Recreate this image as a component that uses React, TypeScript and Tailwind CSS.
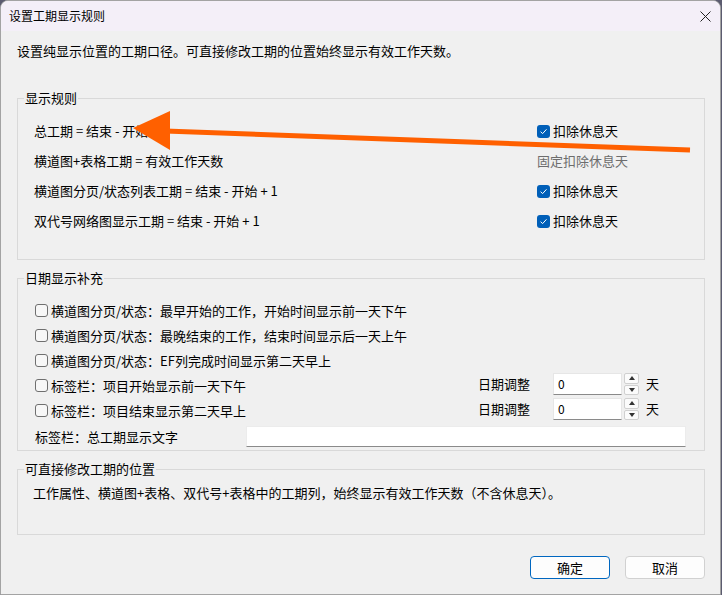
import React from 'react';

const Box = ({ checked }: { checked: boolean }) =>
  checked ? (
    <span className="flex h-[13px] w-[13px] shrink-0 items-center justify-center rounded-[3px] bg-[#005fb8]">
      <svg width="9" height="9" viewBox="0 0 9 9">
        <path d="M1.6 4.7 L3.6 6.6 L7.5 2.3" fill="none" stroke="#fff" strokeWidth="1" />
      </svg>
    </span>
  ) : (
    <span className="h-[13px] w-[13px] shrink-0 rounded-[3px] border border-[#6f6f6f] bg-[#f7f7f7]" />
  );

const GroupBox = ({ title, className, children }: { title: string; className: string; children: React.ReactNode }) => (
  <fieldset className={`ml-[16px] w-[688px] border border-[#d9d9d9] ${className}`}>
    <legend className="ml-[6px] px-px text-[13px] leading-[16px]">{title}</legend>
    {children}
  </fieldset>
);

const Spin = () => (
  <div className="ml-[2px] flex h-[22px] w-[15px] flex-col gap-px">
    <span className="flex flex-1 items-center justify-center rounded-[2px] border border-[#d0d0d0] bg-[#fbfbfb]">
      <svg width="6" height="4" viewBox="0 0 6 4"><path d="M0 4 L3 0 L6 4Z" fill="#333" /></svg>
    </span>
    <span className="flex flex-1 items-center justify-center rounded-[2px] border border-[#d0d0d0] bg-[#fbfbfb]">
      <svg width="6" height="4" viewBox="0 0 6 4"><path d="M0 0 L3 4 L6 0Z" fill="#333" /></svg>
    </span>
  </div>
);

const DateAdjust = () => (
  <div className="flex h-[22px] items-center self-start">
    <span className="w-[75px]">日期调整</span>
    <div className="h-[22px] w-[69px] border border-[#e6e6e6] border-b-[#8a8a8a] bg-white pl-[4px] text-[12px] leading-[20px]">0</div>
    <Spin />
    <span className="ml-[7px]">天</span>
  </div>
);

const rules = [
  { text: '总工期 = 结束 - 开始 + 1', right: 'check' },
  { text: '横道图+表格工期 = 有效工作天数', right: 'fixed' },
  { text: '横道图分页/状态列表工期 = 结束 - 开始 + 1', right: 'check' },
  { text: '双代号网络图显示工期 = 结束 - 开始 + 1', right: 'check' },
];

const extras = [
  { text: '横道图分页/状态：最早开始的工作，开始时间显示前一天下午', adjust: false },
  { text: '横道图分页/状态：最晚结束的工作，结束时间显示后一天上午', adjust: false },
  { text: '横道图分页/状态：EF列完成时间显示第二天早上', adjust: false },
  { text: '标签栏：项目开始显示前一天下午', adjust: true },
  { text: '标签栏：项目结束显示第二天早上', adjust: true },
];

export default function App() {
  return (
    <div className="relative h-[595px] w-[722px] overflow-hidden bg-[#5c5c70] font-['Noto_Sans_CJK_SC',sans-serif] text-[13px] text-black">
      <div className="flex h-[595px] w-[721px] flex-col overflow-hidden rounded-t-[8px] border border-[#a3a3a3] bg-[#f0f0f0]">
        {/* title bar */}
        <div className="flex h-[30px] shrink-0 items-center justify-between bg-[#f4eff8] pl-[8px] pr-[9px]">
          <span className="text-[12px] leading-[16px]">设置工期显示规则</span>
          <svg width="11" height="11" viewBox="0 0 11 11">
            <path d="M0.5 0.5 L10.5 10.5 M10.5 0.5 L0.5 10.5" stroke="#222" strokeWidth="1" />
          </svg>
        </div>

        <p className="mt-[10px] pl-[16px] leading-[20px]">设置纯显示位置的工期口径。可直接修改工期的位置始终显示有效工作天数。</p>

        <GroupBox title="显示规则" className="mt-[29px]">
          <div className="pb-[23px] pt-[10px]">
            {rules.map((r) => (
              <div key={r.text} className="flex h-[30px] items-center pl-[16px]">
                <span className="w-[503px]">{r.text}</span>
                {r.right === 'check' ? (
                  <span className="flex items-center gap-[3px]">
                    <Box checked />
                    扣除休息天
                  </span>
                ) : (
                  <span className="text-[#6d6d6d]">固定扣除休息天</span>
                )}
              </div>
            ))}
          </div>
        </GroupBox>

        <GroupBox title="日期显示补充" className="mt-[10px]">
          <div className="pt-[12px]">
            {extras.map((e) => (
              <div key={e.text} className="flex h-[25px] items-center pl-[17px]">
                <span className="flex w-[443px] items-center gap-[3px]">
                  <Box checked={false} />
                  {e.text}
                </span>
                {e.adjust && <DateAdjust />}
              </div>
            ))}
            <div className="flex h-[27px] items-center pl-[17px]">
              <span className="w-[211px]">标签栏：总工期显示文字</span>
              <div className="h-[21px] w-[440px] border border-[#ececec] border-b-[#8a8a8a] bg-white" />
            </div>
          </div>
        </GroupBox>

        <GroupBox title="可直接修改工期的位置" className="mt-[10px]">
          <p className="pb-[31px] pl-[15px] pt-[6px] leading-[20px]">
            工作属性、横道图+表格、双代号+表格中的工期列，始终显示有效工作天数（不含休息天）。
          </p>
        </GroupBox>

        <div className="mt-[21px] flex justify-end gap-[15px] pr-[15px]">
          <button className="h-[23px] w-[80px] rounded-[4px] border border-[#0067c0] bg-[#fdfdfd] text-[13px] leading-[20px]">确定</button>
          <button className="h-[23px] w-[80px] rounded-[4px] border border-[#d1d1d1] bg-[#fdfdfd] text-[13px] leading-[20px]">取消</button>
        </div>
      </div>

      {/* annotation arrow */}
      <svg className="pointer-events-none absolute left-0 top-0" width="722" height="595" viewBox="0 0 722 595">
        <path d="M165 131 L690 150" stroke="#ff6000" strokeWidth="5" />
        <path d="M170 111 L170 150 L133 128 Z" fill="#ff6000" />
      </svg>
    </div>
  );
}
